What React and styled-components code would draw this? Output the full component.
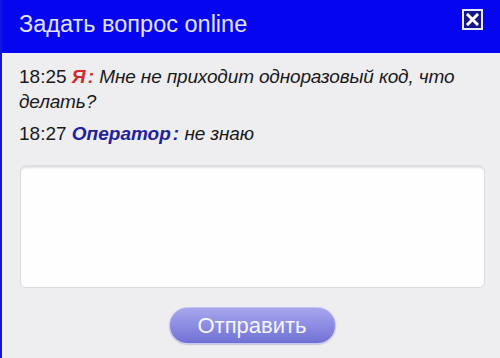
import React from "react";
import styled, { createGlobalStyle } from "styled-components";

const Global = createGlobalStyle`
  html, body { margin: 0; padding: 0; background: #eeedf0; }
  body { font-family: "Liberation Sans", Arial, sans-serif; }
`;

const Window = styled.div`
  width: 500px;
  height: 358px;
  box-sizing: border-box;
  border-left: 2px solid #1414e0;
  background: #eeedf0;
  display: flex;
  flex-direction: column;
  overflow: hidden;
`;

const Header = styled.div`
  height: 53px;
  box-sizing: border-box;
  background: #0505f0;
  display: flex;
  justify-content: space-between;
  align-items: flex-start;
  padding: 11px 17px 0 17px;
`;

const Title = styled.div`
  font-size: 23.5px;
  line-height: 26px;
  color: #e2e2f4;
`;

const Close = styled.button`
  width: 21px;
  height: 21px;
  margin-top: -2px;
  padding: 0;
  box-sizing: border-box;
  border: 2px solid #e8e8f8;
  background: #16168a;
  display: flex;
  align-items: center;
  justify-content: center;
  cursor: pointer;
`;

const Body = styled.div`
  padding: 11px 15px 0 17px;
  display: flex;
  flex-direction: column;
`;

const Message = styled.div`
  font-size: 19px;
  line-height: 25px;
  color: #1a1a1a;
  margin-bottom: 7px;
`;

const Author = styled.span`
  font-weight: bold;
  font-style: italic;
  color: ${(p) => p.$color};
`;

const Colon = styled.span`
  margin-left: 2px;
`;

const Text = styled.span`
  font-style: italic;
  letter-spacing: -0.15px;
`;

const Input = styled.textarea`
  margin-top: 12px;
  margin-left: 1px;
  width: 465px;
  height: 123px;
  box-sizing: border-box;
  border: 1px solid #dcdbe0;
  border-radius: 6px;
  background: #fefefe;
  box-shadow: inset 0 3px 2px -1px rgba(0, 0, 0, 0.12);
  resize: none;
  outline: none;
  font-family: "Liberation Sans", Arial, sans-serif;
  font-size: 16px;
`;

const Footer = styled.div`
  display: flex;
  justify-content: center;
  padding-top: 19px;
`;

const SendButton = styled.button`
  width: 167px;
  height: 37px;
  border-radius: 19px;
  border: 1px solid #c4c4f0;
  background: linear-gradient(#a6a6ee 0%, #8c8ce2 50%, #7070d4 100%);
  box-shadow: 0 1px 1px rgba(80, 80, 160, 0.25);
  color: #f6f6ff;
  font-family: "Liberation Sans", Arial, sans-serif;
  font-size: 22px;
  padding: 0;
  cursor: pointer;
`;

export default function App() {
  return (
    <>
      <Global />
      <Window>
        <Header>
          <Title>Задать вопрос online</Title>
          <Close aria-label="Закрыть">
            <svg width="13" height="13" viewBox="0 0 13 13">
              <path d="M2 2 L11 11 M11 2 L2 11" stroke="#ffffff" strokeWidth="3" strokeLinecap="square" />
            </svg>
          </Close>
        </Header>
        <Body>
          <Message>
            18:25{" "}
            <Author $color="#d42a2a">
              Я<Colon>:</Colon>
            </Author>{" "}
            <Text>Мне не приходит одноразовый код, что делать?</Text>
          </Message>
          <Message>
            18:27{" "}
            <Author $color="#22229a">
              Оператор<Colon>:</Colon>
            </Author>{" "}
            <Text>не знаю</Text>
          </Message>
          <Input />
          <Footer>
            <SendButton>Отправить</SendButton>
          </Footer>
        </Body>
      </Window>
    </>
  );
}
